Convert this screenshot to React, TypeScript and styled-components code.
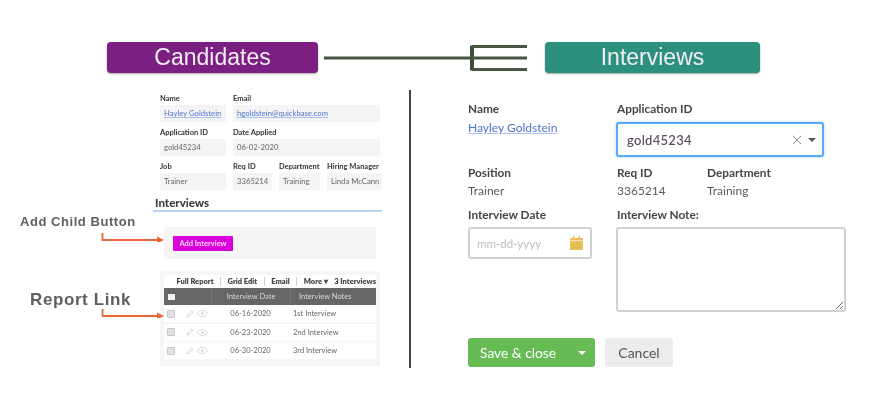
import React from 'react';
import styled, { createGlobalStyle } from 'styled-components';
import { X } from 'lucide-react';

const GlobalStyle = createGlobalStyle`
  html, body {
    margin: 0;
    padding: 0;
    background: #fff;
  }
`;

const candidateRows = [
  { date: '06-16-2020', note: '1st Interview' },
  { date: '06-23-2020', note: '2nd Interview' },
  { date: '06-30-2020', note: '3rd Interview' },
];

export default function App() {
  return (
    <Page>
      <GlobalStyle />
      <Header>
        <Pill $bg="#7b1f82" $width={211}>Candidates</Pill>
        <Connector width="209" height="31" viewBox="0 0 209 31">
          <path d="M0 16h148" stroke="#46573f" strokeWidth="3" />
          <path d="M148 3.5v25" stroke="#3f4f38" strokeWidth="4" />
          <path d="M148 4.5h55M148 16h55M148 27.5h55" stroke="#46573f" strokeWidth="3" fill="none" />
        </Connector>
        <Pill $bg="#2b917c" $width={215}>Interviews</Pill>
      </Header>

      <Body>
        <Annotations>
          <AddChildLabel>Add Child Button</AddChildLabel>
          <ReportLabel>Report Link</ReportLabel>
        </Annotations>

        <Record>
          <FieldRow $columns="66px 147px">
            <RecordField label="Name" value="Hayley Goldstein" link />
            <RecordField label="Email" value="hgoldstein@quickbase.com" link />
          </FieldRow>
          <FieldRow $columns="66px 147px">
            <RecordField label="Application ID" value="gold45234" />
            <RecordField label="Date Applied" value="06-02-2020" />
          </FieldRow>
          <FieldRow $columns="66px 39px 41px 55px">
            <RecordField label="Job" value="Trainer" />
            <RecordField label="Req ID" value="3365214" />
            <RecordField label="Department" value="Training" />
            <RecordField label="Hiring Manager" value="Linda McCann" />
          </FieldRow>

          <SectionTitle>Interviews</SectionTitle>

          <AddPanel>
            <AddButton>Add Interview</AddButton>
          </AddPanel>

          <ReportPanel>
            <ReportToolbar>
              <ToolLink>Full Report</ToolLink>
              <ToolDivider />
              <ToolLink>Grid Edit</ToolLink>
              <ToolDivider />
              <ToolLink>Email</ToolLink>
              <ToolDivider />
              <ToolLink>More ▾</ToolLink>
              <ToolCount>3 Interviews</ToolCount>
            </ReportToolbar>
            <ReportHeader>
              <HeadCell><HeadCheck /></HeadCell>
              <HeadCell $center>Interview Date</HeadCell>
              <HeadCell>Interview Notes</HeadCell>
            </ReportHeader>
            {candidateRows.map((row) => (
              <ReportRow key={row.date}>
                <RowActions>
                  <RowCheck />
                  <svg width="8" height="8" viewBox="0 0 8 8">
                    <path d="M1 7l.6-2L5.6 1 7 2.4 3 6.4z" fill="none" stroke="#cfcfcf" strokeWidth="0.9" />
                  </svg>
                  <svg width="11" height="7" viewBox="0 0 11 7">
                    <path d="M.5 3.5C2 1.3 3.7.5 5.5.5s3.500.8 5 3c-1.500 2.200-3.200 3-5 3s-3.500-.8-5-3z" fill="none" stroke="#d4d4d4" strokeWidth="0.9" />
                    <circle cx="5.500" cy="3.500" r="1.500" fill="#dcdcdc" />
                  </svg>
                </RowActions>
                <RowDate>{row.date}</RowDate>
                <RowNote>{row.note}</RowNote>
              </ReportRow>
            ))}
          </ReportPanel>
        </Record>

        <Divider />

        <Form>
          <FormRow>
            <FormCol $width={149}>
              <FormLabel>Name</FormLabel>
              <FormLink>Hayley Goldstein</FormLink>
            </FormCol>
            <FormCol>
              <FormLabel>Application ID</FormLabel>
              <SelectBox>
                <SelectValue>gold45234</SelectValue>
                <X size={16} color="#8a8a8a" strokeWidth={1.5} />
                <Caret $color="#555" />
              </SelectBox>
            </FormCol>
          </FormRow>

          <FormRow $top={9}>
            <FormCol $width={149}>
              <FormLabel>Position</FormLabel>
              <FormValue>Trainer</FormValue>
            </FormCol>
            <FormCol $width={90}>
              <FormLabel>Req ID</FormLabel>
              <FormValue>3365214</FormValue>
            </FormCol>
            <FormCol>
              <FormLabel>Department</FormLabel>
              <FormValue>Training</FormValue>
            </FormCol>
          </FormRow>

          <FormRow $top={10}>
            <FormCol $width={148}>
              <FormLabel>Interview Date</FormLabel>
              <DateBox>
                <Placeholder>mm-dd-yyyy</Placeholder>
                <svg width="13" height="14" viewBox="0 0 13 14">
                  <path d="M3 0h1.500v2H3zM8.500 0H10v2H8.500z" fill="#e4bd55" />
                  <path d="M0 2h13v12H0z" fill="#e9c25c" />
                  <path d="M0 4.500h13" stroke="#fff" strokeWidth="0.6" />
                  <path d="M0 8h13M0 11h13M3.500 5v9M6.500 5v9M9.500 5v9" stroke="#d9ae42" strokeWidth="0.4" />
                </svg>
              </DateBox>
            </FormCol>
            <FormCol>
              <NotesLabel>Interview Note:</NotesLabel>
              <NotesArea readOnly />
            </FormCol>
          </FormRow>

          <Actions>
            <SaveButton>
              Save &amp; close
              <Caret $color="#fff" />
            </SaveButton>
            <CancelButton>Cancel</CancelButton>
          </Actions>
        </Form>
      </Body>

      <Arrow $left={100} $top={232} width="65" height="10" viewBox="0 0 65 10">
        <path d="M2.500 1v7H58" fill="none" stroke="#e7673a" strokeWidth="1.800" />
        <path d="M64 8l-7-3.500v7z" fill="#e7673a" />
      </Arrow>
      <Arrow $left={100} $top={308} width="65" height="10" viewBox="0 0 65 10">
        <path d="M2.500 1v7H58" fill="none" stroke="#e7673a" strokeWidth="1.800" />
        <path d="M64 8l-7-3.500v7z" fill="#e7673a" />
      </Arrow>
    </Page>
  );
}

function RecordField({ label, value, link }: { label: string; value: string; link?: boolean }) {
  return (
    <div>
      <RecordLabel>{label}</RecordLabel>
      <RecordValue $link={link}>{value}</RecordValue>
    </div>
  );
}

const Page = styled.div`
  position: relative;
  width: 887px;
  height: 417px;
  overflow: hidden;
  background: #fff;
  font-family: Lato, 'Liberation Sans', sans-serif;
`;

const Header = styled.div`
  display: flex;
  align-items: flex-start;
  height: 31px;
  padding: 42px 0 0 107px;
`;

const Pill = styled.div<{ $bg: string; $width: number }>`
  width: ${(p) => p.$width}px;
  height: 31px;
  border-radius: 4px;
  background: ${(p) => p.$bg};
  box-shadow: 0 1px 2px rgba(0, 0, 0, 0.35);
  color: #f2eef2;
  font-family: 'Liberation Sans', sans-serif;
  font-size: 23px;
  line-height: 31px;
  text-align: center;
  filter: blur(0.3px);
`;

const Connector = styled.svg`
  flex: none;
  margin: 0 12px 0 6px;
  filter: blur(0.3px);
`;

const Body = styled.div`
  display: flex;
  height: 278px;
  margin-top: 17px;
`;

const Annotations = styled.div`
  flex: none;
  display: flex;
  flex-direction: column;
  width: 153px;
  font-family: 'Liberation Sans', sans-serif;
  font-weight: bold;
  color: #5f5f5f;
  filter: blur(0.3px);
`;

const AddChildLabel = styled.div`
  margin: 124px 0 0 20px;
  font-size: 13px;
  line-height: 16px;
  letter-spacing: 0.55px;
  white-space: nowrap;
`;

const ReportLabel = styled.div`
  margin: 58px 0 0 30px;
  font-size: 17px;
  line-height: 24px;
  letter-spacing: 0.6px;
  white-space: nowrap;
`;

const Record = styled.div`
  flex: none;
  display: flex;
  flex-direction: column;
  width: 229px;
  filter: blur(0.45px);
`;

const FieldRow = styled.div<{ $columns: string }>`
  display: grid;
  grid-template-columns: ${(p) => p.$columns};
  column-gap: 7px;
  margin: 1px 0 2px 7px;
`;

const RecordLabel = styled.div`
  height: 14px;
  font-size: 7.5px;
  font-weight: 700;
  line-height: 15px;
  color: #333;
  white-space: nowrap;
`;

const RecordValue = styled.div<{ $link?: boolean }>`
  height: 17px;
  padding-left: 4px;
  background: #f4f4f4;
  font-size: 7.7px;
  line-height: 17px;
  color: ${(p) => (p.$link ? '#4a74cf' : '#666')};
  text-decoration: ${(p) => (p.$link ? 'underline' : 'none')};
  text-decoration-color: #a8c0ee;
  white-space: nowrap;
  overflow: hidden;
`;

const SectionTitle = styled.div`
  margin-top: 4px;
  padding: 0 0 0 2px;
  height: 14px;
  border-bottom: 2px solid #bcd3f6;
  font-size: 11.5px;
  font-weight: 900;
  line-height: 14px;
  color: #3c3c3c;
`;

const AddPanel = styled.div`
  display: flex;
  align-items: center;
  width: 212px;
  height: 32px;
  margin: 15px 0 0 11px;
  padding-left: 9px;
  box-sizing: border-box;
  background: #f5f5f5;
`;

const AddButton = styled.div`
  width: 60px;
  height: 15px;
  border-radius: 1px;
  background: #d900d9;
  color: #f8d8f8;
  font-size: 7.5px;
  font-weight: 700;
  line-height: 15px;
  text-align: center;
`;

const ReportPanel = styled.div`
  width: 220px;
  height: 95px;
  margin: 12px 0 0 7px;
  padding: 4px;
  box-sizing: border-box;
  background: #f6f6f6;
`;

const ReportToolbar = styled.div`
  display: flex;
  align-items: center;
  justify-content: flex-end;
  height: 13px;
  background: #fff;
`;

const ToolLink = styled.span`
  font-size: 7.5px;
  font-weight: 800;
  color: #444;
  white-space: nowrap;
`;

const ToolDivider = styled.span`
  width: 1px;
  height: 9px;
  margin: 0 6.5px;
  background: #b5d3f2;
`;

const ToolCount = styled(ToolLink)`
  margin-left: 6.5px;
`;

const ReportHeader = styled.div`
  display: grid;
  grid-template-columns: 47px 79px 1fr;
  height: 17px;
  background: #666;
`;

const HeadCell = styled.div<{ $center?: boolean }>`
  display: flex;
  align-items: center;
  justify-content: ${(p) => (p.$center ? 'center' : 'flex-start')};
  padding-left: ${(p) => (p.$center ? 0 : 8)}px;
  border-left: 1px solid #777;
  color: #d8d8d8;
  font-size: 7.5px;
  &:first-child {
    padding-left: 4px;
    border-left: 0;
  }
`;

const HeadCheck = styled.span`
  width: 7px;
  height: 6px;
  background: #f2f2f2;
`;

const ReportRow = styled.div`
  display: grid;
  grid-template-columns: 47px 79px 1fr;
  align-items: center;
  height: 17px;
  margin-top: 1.5px;
  background: #fff;
  &:nth-child(3) {
    margin-top: 0;
  }
`;

const RowActions = styled.div`
  display: flex;
  align-items: center;
  gap: 3px;
  padding-left: 3px;
`;

const RowCheck = styled.span`
  width: 6px;
  height: 6px;
  margin-right: 8px;
  border: 1px solid #c8c8c8;
  border-radius: 1px;
  background: #e2e2e2;
`;

const RowDate = styled.div`
  font-size: 7.5px;
  color: #666;
  text-align: center;
`;

const RowNote = styled.div`
  padding-left: 3px;
  font-size: 7.5px;
  color: #666;
`;

const Divider = styled.div`
  flex: none;
  width: 2px;
  height: 278px;
  margin: 0 57px 0 27px;
  background: #3d4a38;
`;

const Form = styled.div`
  flex: none;
  display: flex;
  flex-direction: column;
  width: 378px;
  padding-top: 12px;
  filter: blur(0.3px);
`;

const FormRow = styled.div<{ $top?: number }>`
  display: flex;
  margin-top: ${(p) => p.$top ?? 0}px;
`;

const FormCol = styled.div<{ $width?: number }>`
  display: flex;
  flex-direction: column;
  flex: ${(p) => (p.$width ? 'none' : 1)};
  width: ${(p) => (p.$width ? `${p.$width}px` : 'auto')};
`;

const FormLabel = styled.div`
  height: 14px;
  font-size: 11.8px;
  font-weight: 700;
  line-height: 14px;
  color: #444;
  white-space: nowrap;
`;

const NotesLabel = styled(FormLabel)`
  padding-left: 1px;
`;

const FormLink = styled.a`
  margin-top: 5px;
  font-size: 12px;
  line-height: 14px;
  color: #4c74cf;
  text-decoration: underline;
  text-decoration-color: #a8c0ee;
`;

const FormValue = styled.div`
  margin-top: 4px;
  font-size: 12px;
  line-height: 14px;
  color: #5a5a5a;
`;

const SelectBox = styled.div`
  display: flex;
  align-items: center;
  box-sizing: border-box;
  width: 208px;
  height: 35px;
  margin: 6px 0 0 -1px;
  padding: 0 6px 0 9px;
  border: 2px solid #5aa6f6;
  border-radius: 3px;
  box-shadow: 0 0 3px rgba(90, 166, 246, 0.5);
`;

const SelectValue = styled.span`
  flex: 1;
  font-size: 13px;
  font-weight: 500;
  letter-spacing: 0.3px;
  color: #55485e;
`;

const Caret = styled.span<{ $color: string }>`
  width: 0;
  height: 0;
  margin-left: 3px;
  border-left: 4.500px solid transparent;
  border-right: 4.500px solid transparent;
  border-top: 4.500px solid ${(p) => p.$color};
`;

const DateBox = styled.div`
  display: flex;
  align-items: center;
  justify-content: space-between;
  box-sizing: border-box;
  width: 124px;
  height: 32px;
  margin-top: 5px;
  padding: 0 7px 0 7px;
  border: 2px solid #d2d2d2;
  border-radius: 3px;
`;

const Placeholder = styled.span`
  font-size: 11.5px;
  color: #bdbdbd;
`;

const NotesArea = styled.textarea`
  display: block;
  box-sizing: border-box;
  width: 230px;
  height: 85px;
  margin-top: 5px;
  border: 2px solid #d2d2d2;
  border-radius: 3px;
  outline: none;
  background: #fff;
`;

const Actions = styled.div`
  display: flex;
  gap: 10px;
  margin-top: 26px;
`;

const SaveButton = styled.div`
  display: flex;
  align-items: center;
  justify-content: space-between;
  box-sizing: border-box;
  width: 127px;
  height: 29px;
  padding: 0 9px 0 12px;
  border-radius: 3px;
  background: #66bb55;
  color: #fff;
  font-size: 13.8px;
`;

const CancelButton = styled.div`
  width: 68px;
  height: 29px;
  border-radius: 3px;
  background: #ececec;
  color: #555;
  font-size: 14px;
  line-height: 29px;
  text-align: center;
`;

const Arrow = styled.svg<{ $left: number; $top: number }>`
  position: absolute;
  left: ${(p) => p.$left}px;
  top: ${(p) => p.$top}px;
`;
